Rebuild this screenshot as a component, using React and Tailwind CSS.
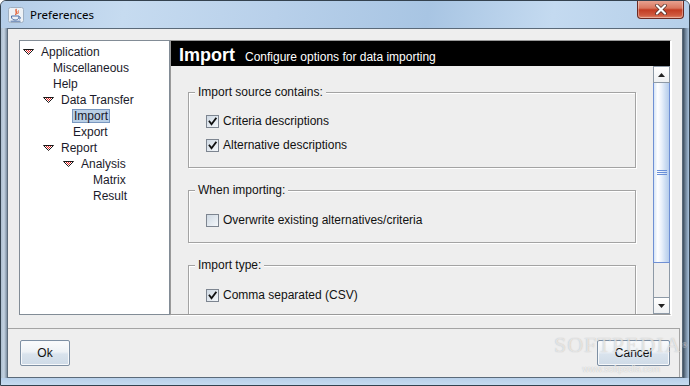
import React from "react";

function Tri() {
  return (
    <svg width="11" height="6" viewBox="0 0 11 6" className="shrink-0">
      <defs>
        <pattern id="chk" width="2" height="2" patternUnits="userSpaceOnUse">
          <rect width="2" height="2" fill="#ffffff" />
          <rect width="1" height="1" fill="#e02020" />
          <rect x="1" y="1" width="1" height="1" fill="#e02020" />
        </pattern>
      </defs>
      <polygon points="0.5,0.5 10.5,0.5 5.5,5.5" fill="url(#chk)" stroke="#1a1a1a" strokeWidth="1" />
    </svg>
  );
}

function Row({ pl, tri, children, sel }) {
  return (
    <div className={`flex items-center h-[16px] ${pl}`}>
      {tri && <Tri />}
      {sel ? (
        <span className="h-[14px] leading-[12px] border border-[#7a98c0] bg-[#b9cfe6] px-[1px] text-[#1a1a2a]">{children}</span>
      ) : (
        <span className={`${tri ? "ml-[7px]" : ""} text-[#1a1a2a]`}>{children}</span>
      )}
    </div>
  );
}

function Check({ checked, label }) {
  return (
    <div className="flex items-center h-[24px] pl-[17px]">
      <span className="w-[13px] h-[13px] border border-[#7d8590] bg-[linear-gradient(135deg,#cfd9e3,#f4f7fa)] flex items-center justify-center">
        {checked && (
          <svg width="9" height="9" viewBox="0 0 9 9">
            <path d="M1.5 4.5 L3.5 7.2 L7.8 1.5" fill="none" stroke="#111" strokeWidth="1.8" strokeLinecap="square" />
          </svg>
        )}
      </span>
      <span className="ml-[4px] text-[#111]">{label}</span>
    </div>
  );
}

function Group({ title, children, cls, pad }) {
  return (
    <fieldset className={`mx-[17px] border border-[#a3a3a3] shadow-[inset_1px_1px_0_#ffffff,1px_1px_0_#ffffff] ${cls}`}>
      <legend className="ml-[6px] px-[3px] leading-[14px] bg-[#eeeeee] text-[#111]">{title}</legend>
      <div className={pad}>{children}</div>
    </fieldset>
  );
}

function Btn({ children, w }) {
  return (
    <div className={`${w} h-[26px] border border-[#7d8fa3] rounded-[2px] bg-[linear-gradient(180deg,#fafbfc_0%,#eef2f6_45%,#d9e3ed_55%,#cfdbe7_100%)] flex items-center justify-center text-[#111] shadow-[inset_0_0_0_1px_#f7f9fb]`}>
      {children}
    </div>
  );
}

export default function App() {
  return (
    <div className="w-[690px] h-[386px] relative overflow-hidden flex flex-col border border-[#34424f] rounded-t-[6px] bg-[linear-gradient(180deg,#b9d1ea,#9fb4c9_60%,#7f93a8)] font-['Liberation_Sans',Arial,sans-serif] text-[12px]">
      {/* title bar */}
      <div className="h-[27px] shrink-0 flex items-start bg-[linear-gradient(100deg,#b4cde8_0%,#c6dbf0_18%,#b8d0ea_40%,#a8c5e3_62%,#c4daf0_80%,#b5cfe9_100%)]">
        <div className="mt-[6px] ml-[7px] w-[16px] h-[16px]">
          <svg width="16" height="16" viewBox="0 0 16 16">
            <rect x="0.5" y="0.5" width="15" height="15" rx="2" fill="#eef2f6" stroke="#9fb0c2" />
            <path d="M8.5 2 C6.5 3.5, 10 5, 7.5 8" fill="none" stroke="#e2572b" strokeWidth="1.4" />
            <path d="M10.5 3.5 C9.5 4.5, 11 5.5, 9.5 7" fill="none" stroke="#e2572b" strokeWidth="1" />
            <path d="M3.5 9 H11 V10 C11 12 9 13 7.2 13 C5.5 13 3.5 12 3.5 10 Z" fill="none" stroke="#4a6ea8" strokeWidth="1" />
            <path d="M11 9.8 C13 9.8 13 12 11 12" fill="none" stroke="#4a6ea8" strokeWidth="1" />
            <path d="M2.5 14.2 H12.5" stroke="#4a6ea8" strokeWidth="1" />
          </svg>
        </div>
        <div className="ml-[6px] mt-[6px] font-['Noto_Sans',sans-serif] text-[11.5px] leading-[16px] text-black">Preferences</div>
        <div className="ml-auto mr-[5px] w-[47px] h-[19px] -mt-[1px] rounded-b-[4px] border border-[#6b2a22] border-t-0 bg-[linear-gradient(180deg,#e9a796_0%,#d9775f_45%,#c23c22_55%,#cf5a3f_85%,#e08a6e_100%)] flex items-center justify-center shadow-[inset_0_0_0_1px_rgba(255,255,255,0.35)]">
          <svg width="14" height="11" viewBox="0 0 14 11">
            <path d="M3 1.5 L11 9.5 M11 1.5 L3 9.5" stroke="#4a2a24" strokeWidth="3.6" strokeLinecap="round" />
            <path d="M3 1.5 L11 9.5 M11 1.5 L3 9.5" stroke="#ffffff" strokeWidth="2.2" strokeLinecap="round" />
          </svg>
        </div>
      </div>

      {/* body */}
      <div className="flex-1 flex min-h-0">
        <div className="w-[6px] bg-[linear-gradient(90deg,#aebfd0,#c3d2e1_50%,#7c8ea1)]" />
        <div className="flex-1 flex flex-col border border-[#5b6a79] bg-[#eeeeee] min-w-0">
          {/* panels */}
          <div className="flex pl-[11px] pr-[11px] pt-[11px]">
            <div className="w-[151px] h-[275px] border border-[#828c96] bg-white pt-[3px] overflow-hidden">
              <Row pl="pl-[3px]" tri>Application</Row>
              <Row pl="pl-[33px]">Miscellaneous</Row>
              <Row pl="pl-[33px]">Help</Row>
              <Row pl="pl-[23px]" tri>Data Transfer</Row>
              <Row pl="pl-[52px]" sel>Import</Row>
              <Row pl="pl-[53px]">Export</Row>
              <Row pl="pl-[23px]" tri>Report</Row>
              <Row pl="pl-[43px]" tri>Analysis</Row>
              <Row pl="pl-[73px]">Matrix</Row>
              <Row pl="pl-[73px]">Result</Row>
            </div>
            <div className="w-[501px] h-[275px] border border-[#999999] border-r-white shadow-[1px_1px_0_#ffffff] flex flex-col">
              <div className="h-[25px] shrink-0 bg-black flex items-baseline pl-[8px] pt-[5px] text-white">
                <span className="font-bold text-[18px] leading-[18px]">Import</span>
                <span className="ml-[10px] text-[12px] leading-[14px]">Configure options for data importing</span>
              </div>
              <div className="flex-1 flex min-h-0">
                <div className="flex-1 overflow-hidden">
                  <Group title="Import source contains:" cls="mt-[19px]" pad="pt-[10px] pb-[10px]">
                    <Check checked label="Criteria descriptions" />
                    <Check checked label="Alternative descriptions" />
                  </Group>
                  <Group title="When importing:" cls="mt-[15px]" pad="pt-[11px] pb-[10px]">
                    <Check label="Overwrite existing alternatives/criteria" />
                  </Group>
                  <Group title="Import type:" cls="mt-[15px]" pad="pt-[11px] pb-[10px]">
                    <Check checked label="Comma separated (CSV)" />
                  </Group>
                </div>
                {/* scrollbar */}
                <div className="w-[17px] flex flex-col">
                  <div className="h-[17px] border border-[#8d99a6] bg-[linear-gradient(180deg,#ffffff,#eef0f2)] flex items-center justify-center">
                    <svg width="7" height="4" viewBox="0 0 7 4"><polygon points="3.5,0 7,4 0,4" fill="#222" /></svg>
                  </div>
                  <div className="h-[180px] border-x border-b border-[#6f90d4] bg-[linear-gradient(90deg,#d6e4f6_0%,#ffffff_25%,#eaf1fb_50%,#c8daf1_80%,#b7cdec_100%)] flex items-center justify-center">
                    <div className="flex flex-col gap-[1px]">
                      <div className="w-[10px] h-[1px] bg-[#6a8fd8]" />
                      <div className="w-[10px] h-[1px] bg-[#6a8fd8]" />
                      <div className="w-[10px] h-[1px] bg-[#6a8fd8]" />
                    </div>
                  </div>
                  <div className="flex-1 border-x border-[#8d99a6] bg-[#eeeeee]" />
                  <div className="h-[17px] border border-[#8d99a6] bg-[linear-gradient(180deg,#ffffff,#eef0f2)] flex items-center justify-center">
                    <svg width="7" height="4" viewBox="0 0 7 4"><polygon points="0,0 7,0 3.5,4" fill="#222" /></svg>
                  </div>
                </div>
              </div>
            </div>
          </div>
          {/* bottom buttons */}
          <div className="mt-[13px] mr-[2px] flex-1 border-t border-r border-[#a4a4a4] flex items-start justify-between pl-[12px] pr-[9px] pt-[11px]">
            <Btn w="w-[50px]">Ok</Btn>
            <Btn w="w-[73px]">Cancel</Btn>
          </div>
        </div>
        <div className="w-[6px] bg-[linear-gradient(90deg,#3d4d5d,#6d8196_40%,#a9c2dc)]" />
      </div>
      <div className="h-[7px] shrink-0 bg-[linear-gradient(180deg,#b8d0ea,#c6dbf0)]" />

      {/* watermark */}
      <div className="absolute left-[553px] top-[333px] pointer-events-none flex flex-col items-center">
        <div className="font-['Liberation_Serif',serif] text-[22px] leading-[22px] tracking-[1px] text-white/60 [text-shadow:0_0_1px_rgba(120,120,120,0.5)]">SOFTPEDIA<sup className="text-[8px]">®</sup></div>
        <div className="mt-[9px] text-[9px] leading-[9px] text-white/80 [text-shadow:0_0_1px_rgba(120,120,120,0.6)]">www.softpedia.com</div>
      </div>
    </div>
  );
}
